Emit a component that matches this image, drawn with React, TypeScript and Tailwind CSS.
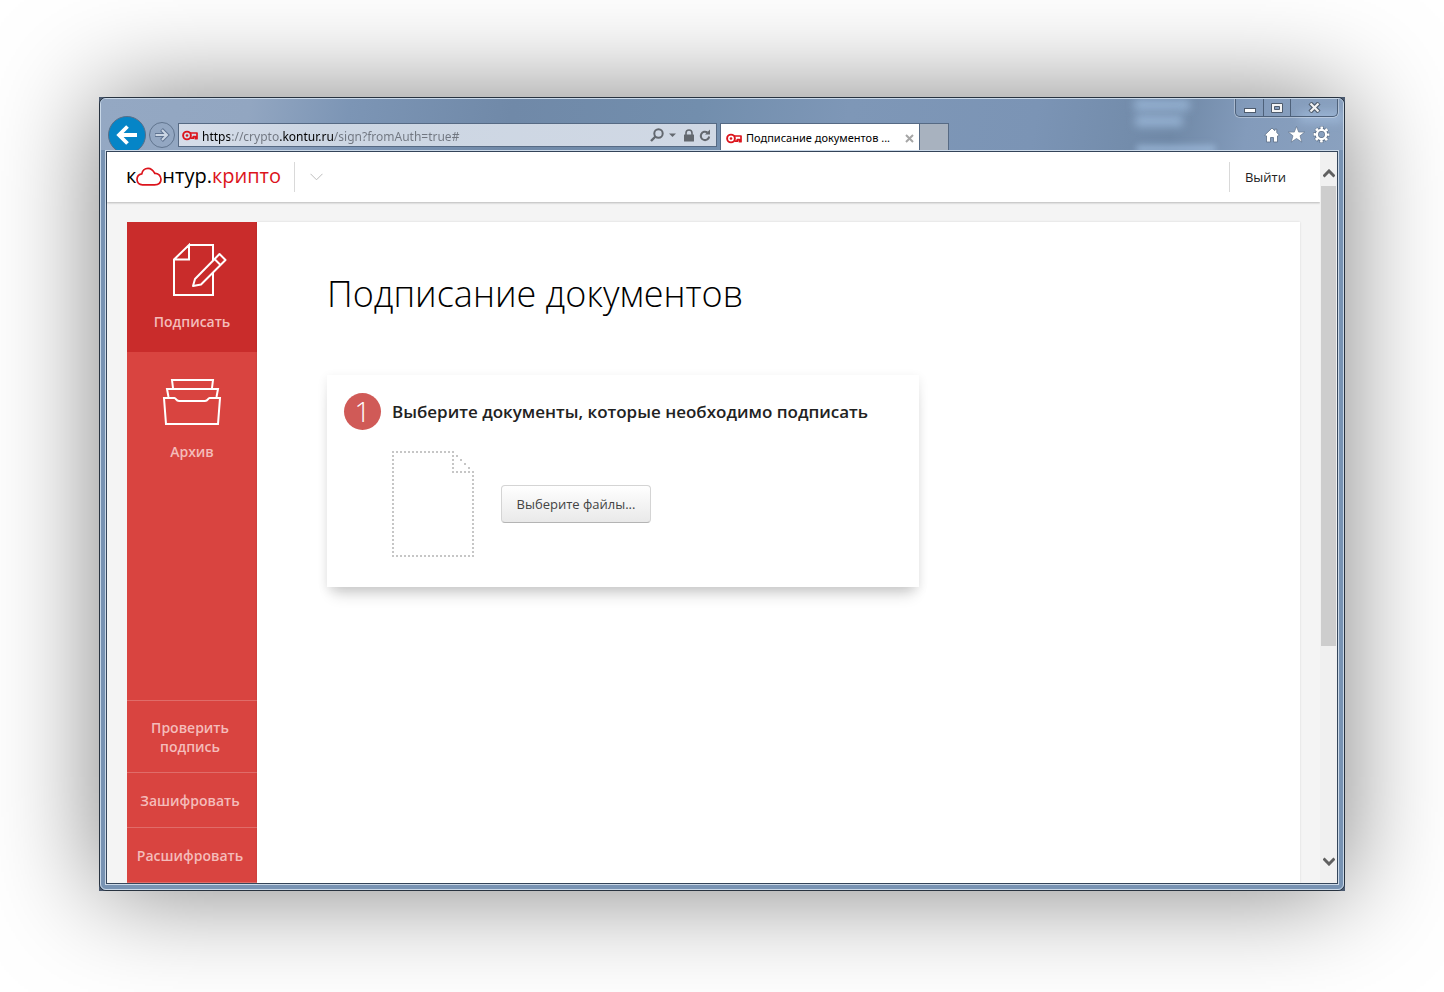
import type { ReactNode } from "react";

const MAIN_NAV = [
  { id: "sign", label: "Подписать", active: true },
  { id: "archive", label: "Архив", active: false },
];

const EXTRA_NAV = ["Проверить подпись", "Зашифровать", "Расшифровать"];

function KeyIcon() {
  return (
    <svg width="16" height="11" viewBox="0 0 16 11" className="shrink-0" fill="none" stroke="#dc141c" aria-hidden="true">
      <circle cx="5" cy="5.500" r="3.900" strokeWidth="1.900" />
      <circle cx="5" cy="5.500" r="1.300" fill="#dc141c" stroke="none" />
      <path d="M8 3H15V8.700H13.400V6.600H11.300V8.200H8.500" strokeWidth="1.700" strokeLinejoin="round" />
    </svg>
  );
}

function SignIcon() {
  return (
    <svg width="56" height="54" viewBox="0 0 56 54" fill="none" stroke="#fff" strokeWidth="2" aria-hidden="true">
      <path d="M17 2H41V52H2V16.500L17 2V16.500H2" />
      <path d="M21 43L23 36L47.500 11L53.500 17L29 41.500L21 43Z" fill="#c92c2b" strokeLinejoin="round" />
      <path d="M42.500 16L48.500 22" />
    </svg>
  );
}

function ArchiveIcon() {
  return (
    <svg width="60" height="48" viewBox="0 0 60 48" fill="none" stroke="#fff" strokeWidth="2" aria-hidden="true">
      <path d="M11 10L10 2H51L50 10" />
      <path d="M6.500 19L5 11H56L54.500 19" />
      <path d="M2 20H12.500C14 20 14 23 17 23H43C46 23 46 20 47.500 20H58L56 46H4Z" />
    </svg>
  );
}

function CloudIcon() {
  return (
    <svg width="26" height="19" viewBox="0 0 26 19" className="shrink-0" fill="none" aria-hidden="true">
      <path d="M6.500 17.800H18.500C22.500 17.800 25 15.600 25 12.200C25 8.600 22 6.200 18.800 6.400C17.200 3.200 15 1.300 12 1.300C8.800 1.300 6.200 3.500 5.800 6.800C3 7.300 1 9.500 1 12.300C1 15.600 3.300 17.800 6.500 17.800Z" stroke="#dc141c" strokeWidth="1.700" />
    </svg>
  );
}

function EmptyDocument() {
  return (
    <svg width="82" height="106" viewBox="0 0 82 106" className="shrink-0" fill="none" stroke="#c6c6c6" strokeWidth="2" strokeDasharray="2 2" aria-hidden="true">
      <path d="M0 1H62" />
      <path d="M1 4V106" />
      <path d="M0 105H82" />
      <path d="M81 24V106" />
      <path d="M61 4V22" />
      <path d="M60 21H82" />
      <path d="M64 5h2M68 9h2M72 13h2M76 17h2" strokeDasharray="none" />
    </svg>
  );
}

function CaptionButton({ label, className, children }: { label: string; className: string; children: ReactNode }) {
  return (
    <button aria-label={label} className={`flex h-full items-center justify-center ${className}`}>
      {children}
    </button>
  );
}

function TitleBar() {
  return (
    <header className="relative flex h-[51px] shrink-0 overflow-hidden bg-[linear-gradient(100deg,#94a8c3_0%,#92a6c1_12%,#7c95b5_20%,#7089a8_33%,#728ead_48%,#7e97b7_60%,#7b94b5_75%,#7089a7_86%,#839bbb_92%,#8aa1bf_100%)]">
      {/* Desktop labels showing through the glass */}
      <div className="absolute top-0 right-[153px] h-3 w-14 rounded bg-[#a9c6e8]/60 blur-[4px]" />
      <div className="absolute top-4 right-[160px] h-3 w-12 rounded bg-[#a9c6e8]/60 blur-[4px]" />
      <div className="absolute top-[46px] right-[127px] h-2 w-20 rounded bg-[#a9c6e8]/60 blur-[3px]" />
      <div className="absolute top-3 right-0 h-3 w-11 rounded bg-[#a9c6e8]/50 blur-[4px]" />

      <div className="relative flex min-w-0 flex-1 items-start pt-[17px] pl-[7px]">
        <button aria-label="Назад" className="flex size-[38px] shrink-0 items-center justify-center rounded-full border border-[#5a6f88] bg-[#0585c7]">
          <svg width="22" height="20" viewBox="0 0 22 20" fill="none" stroke="#fff" strokeWidth="3.800" aria-hidden="true">
            <path d="M21 10H3M11.500 1.500L3 10L11.500 18.500" />
          </svg>
        </button>
        <button aria-label="Вперёд" className="mt-[6px] ml-[3px] flex size-[26px] shrink-0 items-center justify-center rounded-full border border-[#61758f]">
          <svg width="16" height="14" viewBox="0 0 16 14" fill="none" aria-hidden="true">
            <path d="M1 7H13M7.500 1.500L13 7L7.500 12.500" stroke="#5f7390" strokeWidth="4" />
            <path d="M1.500 7H13M8 2L13 7L8 12" stroke="#cbd6e4" strokeWidth="2" />
          </svg>
        </button>

        <div className="mt-[7px] ml-[3px] flex h-6 w-[539px] min-w-0 items-center border border-[#566a84] bg-[linear-gradient(100deg,#d6dde9,#ccd6e3_25%,#d0d8e4)] pr-[5px] pl-[3px]">
          <KeyIcon />
          <input
            aria-label="Адрес"
            defaultValue="https://crypto.kontur.ru/sign?fromAuth=true#"
            className="ml-1 h-full min-w-0 flex-1 bg-[linear-gradient(90deg,#000_28px,#707680_28px,#707680_78px,#000_78px,#000_132px,#707680_132px)] bg-clip-text pt-[2px] font-['Noto_Sans',sans-serif] text-[12px] leading-5 text-transparent outline-none"
          />
          <button aria-label="Поиск" className="flex items-center gap-1">
            <svg width="14" height="14" viewBox="0 0 14 14" fill="none" stroke="#63686f" strokeWidth="2" aria-hidden="true">
              <circle cx="8.500" cy="5.500" r="4.200" />
              <path d="M5.500 8.500L1 13" strokeWidth="2.400" />
            </svg>
            <svg width="9" height="5" viewBox="0 0 9 5" aria-hidden="true">
              <path d="M1 0.500H8L4.500 4Z" fill="#63686f" />
            </svg>
          </button>
          <svg width="12" height="13" viewBox="0 0 12 13" className="ml-[6px] shrink-0" aria-hidden="true">
            <rect x="1" y="5.500" width="10" height="7" rx="0.500" fill="#63686f" />
            <path d="M3 6V4a3 3 0 0 1 6 0V6" fill="none" stroke="#63686f" strokeWidth="1.600" />
          </svg>
          <button aria-label="Обновить" className="ml-[4px]">
            <svg width="12" height="13" viewBox="0 0 12 13" fill="none" aria-hidden="true">
              <path d="M8.500 3.500A4.200 4.200 0 1 0 10.200 7.500" stroke="#63686f" strokeWidth="2" />
              <path d="M6 5.500H11V0.500Z" fill="#63686f" />
            </svg>
          </button>
        </div>

        <div className="mt-[7px] ml-[3px] flex h-[27px] w-[200px] shrink-0 items-center border border-b-0 border-[#566a84] bg-white pt-[2px] pr-[5px] pl-[5px]">
          <KeyIcon />
          <span className="ml-1 flex-1 font-['Noto_Sans',sans-serif] text-[11px] leading-5 whitespace-nowrap text-black">Подписание документов ...</span>
          <button aria-label="Закрыть вкладку">
            <svg width="9" height="9" viewBox="0 0 9 9" stroke="#a6a6a6" strokeWidth="2" aria-hidden="true">
              <path d="M1 1L8 8M8 1L1 8" />
            </svg>
          </button>
        </div>
        <button aria-label="Новая вкладка" className="mt-[7px] h-[27px] w-[29px] shrink-0 border border-b-0 border-l-0 border-[#566a84] bg-[#a8b2bf]" />
      </div>

      <div className="relative flex shrink-0 flex-col items-end pr-[5px]">
        <div className="flex h-[18px] overflow-hidden rounded-b-[5px] border border-t-0 border-[#4e617a] shadow-[0_0_0_1px_#ffffff55]">
          <CaptionButton label="Свернуть" className="w-[28px] border-r border-[#4e617a]">
            <svg width="12" height="5" viewBox="0 0 12 5" className="mt-[6px]" aria-hidden="true">
              <rect x="0.500" y="0.500" width="11" height="4" fill="#fff" stroke="#4e5b6c" />
            </svg>
          </CaptionButton>
          <CaptionButton label="Развернуть" className="w-[27px] border-r border-[#4e617a]">
            <svg width="12" height="10" viewBox="0 0 12 10" aria-hidden="true">
              <path d="M0.500 0.500H11.500V9.500H0.500ZM3.500 3.500V6.500H8.500V3.500Z" fill="#f4f4f4" stroke="#4e5b6c" fillRule="evenodd" />
            </svg>
          </CaptionButton>
          <CaptionButton label="Закрыть" className="w-[46px]">
            <svg width="13" height="11" viewBox="0 0 13 11" fill="none" aria-hidden="true">
              <path d="M2 1L11 10M11 1L2 10" stroke="#4e5b6c" strokeWidth="4.400" />
              <path d="M2.500 1.500L10.500 9.500M10.500 1.500L2.500 9.500" stroke="#f4f4f4" strokeWidth="2.200" />
            </svg>
          </CaptionButton>
        </div>
        <div className="flex items-center gap-2 pt-[9px] pr-[8px]">
          <button aria-label="Домой">
            <svg width="16" height="16" viewBox="0 0 16 16" fill="#fff" stroke="#5b6d85" strokeWidth="0.800" aria-hidden="true">
              <path d="M8 1L0.800 8L2 9.300L2.500 8.900V15H6.500V10.500H9.500V15H13.500V8.900L14 9.300L15.200 8L12.800 5.600V2.200H10.800V3.700Z" />
            </svg>
          </button>
          <button aria-label="Избранное">
            <svg width="17" height="17" viewBox="0 0 17 16" fill="#fff" stroke="#5b6d85" strokeWidth="0.600" aria-hidden="true">
              <path d="M8.500 0L10.700 5.600H16.700L12 9.300L13.800 15.600L8.500 12L3.200 15.600L5 9.300L0.300 5.600H6.300Z" />
            </svg>
          </button>
          <button aria-label="Сервис">
            <svg width="17" height="17" viewBox="0 0 17 17" fill="none" aria-hidden="true">
              <circle cx="8.500" cy="8.500" r="4.700" stroke="#5b6d85" strokeWidth="4" />
              <circle cx="8.500" cy="8.500" r="6.600" stroke="#5b6d85" strokeWidth="3.400" strokeDasharray="3.600 1.584" strokeDashoffset="1.800" />
              <circle cx="8.500" cy="8.500" r="6.600" stroke="#fff" strokeWidth="2.600" strokeDasharray="2.600 2.584" strokeDashoffset="1.300" />
              <circle cx="8.500" cy="8.500" r="4.600" stroke="#fff" strokeWidth="2.400" />
            </svg>
          </button>
        </div>
      </div>
    </header>
  );
}

function Sidebar() {
  return (
    <nav className="flex w-[130px] shrink-0 flex-col bg-[#d94440] text-center text-[14px] leading-[19px] font-semibold text-[#f4bcba]">
      {MAIN_NAV.map((item) => (
        <a
          key={item.id}
          href={`#${item.id}`}
          className={item.active ? "flex h-[130px] flex-col items-center bg-[#c92c2b] pt-[21px]" : "flex h-[130px] flex-col items-center pt-[26px]"}
        >
          {item.active ? (
            <span className="flex h-[69px] pl-[16px]"><SignIcon /></span>
          ) : (
            <span className="flex h-[64px]"><ArchiveIcon /></span>
          )}
          {item.label}
        </a>
      ))}
      <div className="mt-auto border-b border-[#e06c69]">
        {EXTRA_NAV.map((label) => (
          <a key={label} href="#" className="flex min-h-[55px] items-center justify-center border-t border-[#e06c69] pt-[17px] pr-3 pb-4 pl-2">
            {label}
          </a>
        ))}
      </div>
    </nav>
  );
}

function ScrollBar() {
  return (
    <div className="flex w-[17px] shrink-0 flex-col items-center bg-[#f0f0f0] pt-[17px] pb-[17px]">
      <svg width="12" height="9" viewBox="0 0 12 9" className="shrink-0" fill="none" stroke="#606060" strokeWidth="3" aria-hidden="true">
        <path d="M0.500 7.500L6 2L11.500 7.500" />
      </svg>
      <div className="mt-[8px] mb-auto h-[460px] min-h-0 w-[15px] bg-[#cdcdcd]" />
      <svg width="12" height="9" viewBox="0 0 12 9" className="shrink-0" fill="none" stroke="#606060" strokeWidth="3" aria-hidden="true">
        <path d="M0.500 1.500L6 7L11.500 1.500" />
      </svg>
    </div>
  );
}

export default function App() {
  return (
    <div className="flex min-h-screen flex-col bg-white px-[99px] pt-[97px] pb-[101px] font-['Open_Sans','Noto_Sans',sans-serif]">
      <div className="flex flex-1 bg-[#4b5a70] shadow-[0_0_100px_rgba(0,0,0,0.5)]">
        <div className="flex min-w-0 flex-1 flex-col rounded-[7px] border border-[#27323f] bg-[#7893b3]">
          <div className="flex min-w-0 flex-1 flex-col overflow-hidden rounded-md border border-[#c9d8e8]">
            <TitleBar />

            <div className="mx-1 mb-1 flex min-h-0 flex-1 border border-[#cbd9e8]">
              <div className="flex min-w-0 flex-1 border border-[#35465b] bg-[#f4f4f4]">
                <div className="flex min-w-0 flex-1 flex-col">
                  {/* Service header */}
                  <div className="flex h-[50px] shrink-0 items-center bg-white pl-[19px] shadow-[0_1px_2px_rgba(0,0,0,0.25)]">
                    <a href="#" className="flex items-center pb-[2px] text-[20px] leading-7 text-black">
                      к<CloudIcon />нтур.<span className="text-[#dc141c]">крипто</span>
                    </a>
                    <div className="ml-[13px] h-[30px] w-px bg-[#d9d9d9]" />
                    <button aria-label="Сервисы" className="ml-[15px]">
                      <svg width="13" height="8" viewBox="0 0 13 8" fill="none" stroke="#bdbdbd" aria-hidden="true">
                        <path d="M0.500 0.800L6.500 6.800L12.500 0.800" />
                      </svg>
                    </button>
                    <div className="mr-[34px] ml-auto flex h-[30px] items-center border-l border-[#d9d9d9] pl-[15px]">
                      <a href="#" className="text-[13px] leading-5 text-[#222]">Выйти</a>
                    </div>
                  </div>

                  <div className="flex min-h-0 flex-1 px-5 pt-5">
                    <Sidebar />
                    <main className="min-w-0 flex-1 bg-white pt-[46px] pl-[70px] shadow-[0_0_2px_rgba(0,0,0,0.12)]">
                      <h1 className="text-[36px] leading-[52px] font-light text-black">Подписание документов</h1>

                      <section className="mt-[55px] h-[212px] w-[592px] max-w-full bg-white pt-[18px] pl-[17px] shadow-[0_13px_14px_-6px_rgba(0,0,0,0.16),0_3px_10px_rgba(0,0,0,0.09)]">
                        <div className="flex items-center gap-[11px]">
                          <span className="flex size-[37px] items-center justify-center rounded-full bg-[#d05a57] pb-[2px] text-[28px] leading-9 font-light text-white">1</span>
                          <h2 className="text-[17px] leading-6 font-semibold text-[#222]">Выберите документы, которые необходимо подписать</h2>
                        </div>
                        <div className="mt-[21px] flex items-center gap-[27px] pl-[48px]">
                          <EmptyDocument />
                          <button className="h-[38px] w-[150px] rounded-[4px] border border-[#d4d4d4] border-b-[#b4b4b4] bg-gradient-to-b from-white to-[#e9e9e9] text-[13px] leading-5 text-[#444]">
                            Выберите файлы...
                          </button>
                        </div>
                      </section>
                    </main>
                  </div>
                </div>

                <ScrollBar />
              </div>
            </div>
          </div>
        </div>
      </div>
    </div>
  );
}
